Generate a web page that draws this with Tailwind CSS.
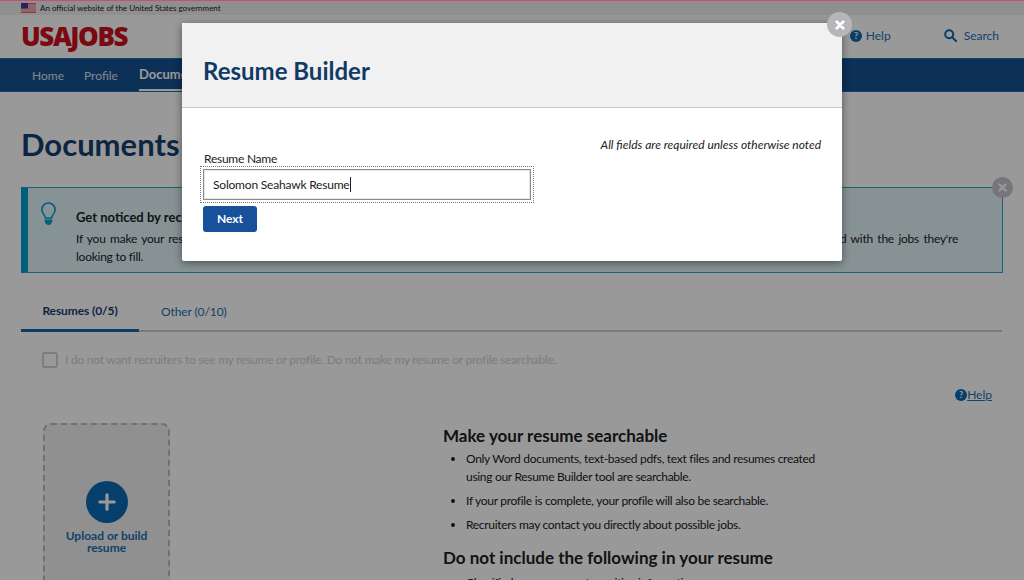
<!DOCTYPE html>
<html lang="en">
<head>
    <meta charset="UTF-8">
    <meta name="viewport" content="width=device-width, initial-scale=1.0">
    <title>Documents - USAJOBS</title>
    <script src="https://cdn.jsdelivr.net/npm/@tailwindcss/browser@4"></script>
</head>
<body class="relative h-[580px] overflow-hidden bg-white font-['Lato','Liberation_Sans',sans-serif] text-[#212121]">
    <!-- Page behind the modal -->
    <div class="h-[580px] overflow-hidden">
        <!-- Government banner -->
        <div class="flex h-[15px] items-center gap-[4px] bg-[#eeeeee] pl-[21px] text-[8px]">
            <svg class="h-[10px] w-[15px]" viewBox="0 0 15 10">
                <rect width="15" height="10" fill="#e4626f"/>
                <path d="M0 2h15M0 4h15M0 6h15M0 8h15" stroke="#fff" stroke-width="0.9"/>
                <rect width="7" height="5.5" fill="#3d3f8f"/>
            </svg>
            <span>An official website of the United States government</span>
        </div>

        <!-- Header -->
        <div class="flex h-[43px] items-center justify-between bg-white pl-[21px] pr-[25px]">
            <span class="font-['Open_Sans',sans-serif] text-[26px] font-extrabold tracking-[-1.4px] text-[#cc1020]">USAJOBS</span>
            <div class="mb-[2px] flex items-center text-[12px] text-[#1a6fb5]">
                <svg class="h-[12px] w-[12px]" viewBox="0 0 12 12">
                    <circle cx="6" cy="6" r="6" fill="#0a6ab5"/>
                    <text x="6" y="9.2" text-anchor="middle" font-size="9" font-weight="700" fill="#fff">?</text>
                </svg>
                <span class="ml-[4px]">Help</span>
                <svg class="ml-[53px] h-[13px] w-[13px]" viewBox="0 0 13 13" fill="none" stroke="#0a6ab5" stroke-width="2">
                    <circle cx="5.2" cy="5.2" r="4"/>
                    <path d="M8.2 8.2l4 4" stroke-linecap="round"/>
                </svg>
                <span class="ml-[7px]">Search</span>
            </div>
        </div>

        <!-- Nav -->
        <div class="flex h-[34px] items-stretch gap-[20px] border-y border-[#2a6cb0] bg-[#17508f] pl-[32px] text-[12px] text-[#d8e2ee]">
            <div class="flex items-center pt-[1px]">Home</div>
            <div class="flex items-center pt-[1px]">Profile</div>
            <div class="ml-[1px] flex items-center border-b-2 border-white pt-[1px] text-[13px] font-bold text-white">Documents</div>
        </div>

        <main class="px-[21px]">
            <h1 class="mt-[32px] text-[31px] leading-[40px] font-bold text-[#173f6e]">Documents</h1>

            <!-- Info alert -->
            <div class="relative mt-[23px] flex h-[86px] w-[982px] border border-[#2aa7cc] border-l-[7px] border-l-[#00a0cc] bg-[#e1f3f8]">
                <svg class="ml-[13px] mt-[14px] h-[24px] w-[15px]" viewBox="0 0 17 25" fill="none" stroke="#00a0cc" stroke-width="1.8">
                    <path d="M5 17c0-3-4-5-4-9.500a7.500 7.500 0 0 1 15 0c0 4.500-4 6.500-4 9.500z"/>
                    <path d="M5 19.500c0 3 2 4.500 3.500 4.500s3.500-1.500 3.500-4.500z" fill="#00a0cc"/>
                </svg>
                <div class="ml-[20px] mt-[20px] text-[12px] leading-[18px] tracking-[-0.25px]">
                    <p class="text-[13px] font-bold tracking-normal">Get noticed by recruiters</p>
                    <p class="mt-[4px] w-[882px] text-justify">If you make your resume searchable, recruiters looking for talent can find you. Your resume lets them see your skills, experience and how you stand with the jobs they're looking&nbsp;to&nbsp;fill.</p>
                </div>
                <div class="absolute -right-[11px] -top-[11px] flex h-[21px] w-[21px] items-center justify-center rounded-full bg-[#c4c4cc]">
                    <svg class="h-[9px] w-[9px]" viewBox="0 0 9 9" stroke="#fff" stroke-width="2.400" stroke-linecap="round"><path d="M1.500 1.500l6 6M7.500 1.500l-6 6"/></svg>
                </div>
            </div>

            <!-- Tabs -->
            <div class="mt-[26px] flex h-[33px] w-[981px] border-b-2 border-[#cccccc] text-[12px] tracking-[-0.1px]">
                <div class="-mb-[2px] flex w-[118px] items-center justify-center border-b-[3px] border-[#0a6ab5] pb-[6px] font-bold text-[#173f6e]">Resumes (0/5)</div>
                <div class="flex items-center pb-[6px] pl-[22px] text-[#1a6fb5]">Other (0/10)</div>
            </div>

            <!-- Searchable checkbox -->
            <div class="ml-[21px] mt-[19px] flex items-center gap-[7px] text-[12px] tracking-[-0.25px] text-[#cfcfcf]">
                <div class="h-[16px] w-[16px] rounded-[3px] border-2 border-[#d0d0d0]"></div>
                <span>I do not want recruiters to see my resume or profile. Do not make my resume or profile searchable.</span>
            </div>

            <div class="mt-[17px] flex w-[971px] items-center justify-end text-[12px] text-[#1a6fb5]">
                <svg class="h-[12px] w-[12px]" viewBox="0 0 12 12">
                    <circle cx="6" cy="6" r="6" fill="#0a6ab5"/>
                    <text x="6" y="9.2" text-anchor="middle" font-size="9" font-weight="700" fill="#fff">?</text>
                </svg>
                <span class="underline">Help</span>
            </div>

            <div class="mt-[19px] flex">
                <!-- Upload card -->
                <div class="ml-[22px] flex h-[200px] w-[127px] flex-col items-center rounded-[8px] border-2 border-dashed border-[#bdbdbd] bg-[#f0f0f0] pt-[56px]">
                    <div class="flex h-[42px] w-[42px] items-center justify-center rounded-full bg-[#0a6ab5]">
                        <svg class="h-[18px] w-[18px]" viewBox="0 0 18 18" stroke="#fff" stroke-width="3.200" stroke-linecap="round"><path d="M9 1.800v14.400M1.800 9h14.400"/></svg>
                    </div>
                    <p class="mt-[7px] text-center text-[12px] leading-[12px] font-bold text-[#1a6fb5]">Upload or build<br>resume</p>
                </div>

                <!-- Searchable tips -->
                <div class="ml-[273px] w-[390px]">
                    <h2 class="mt-[1px] text-[17px] leading-[24px] font-bold">Make your resume searchable</h2>
                    <ul class="ml-[23px] list-disc text-[12px] leading-[18px] tracking-[-0.3px]">
                        <li class="mt-[2px]">Only Word documents, text-based pdfs, text files and resumes created using our Resume Builder tool are searchable.</li>
                        <li class="mt-[6px]">If your profile is complete, your profile will also be searchable.</li>
                        <li class="mt-[6px]">Recruiters may contact you directly about possible jobs.</li>
                    </ul>
                    <h2 class="mt-[12px] text-[17px] leading-[24px] font-bold">Do not include the following in your resume</h2>
                    <ul class="ml-[23px] list-disc text-[12px] leading-[18px] tracking-[-0.3px]">
                        <li class="mt-[4px]">Classified or government sensitive information</li>
                    </ul>
                </div>
            </div>
        </main>
    </div>

    <!-- Overlay -->
    <div class="absolute inset-0 bg-black/40"></div>
    <div class="absolute left-0 top-0 h-px w-full bg-[#c4507f]"></div>

    <!-- Resume Builder modal -->
    <div class="absolute left-[182px] top-[23px] h-[238px] w-[660px] rounded-[2px] bg-white shadow-[0_2px_8px_rgba(0,0,0,0.45)]">
        <div class="flex h-[85px] items-center border-b border-[#c8c8c8] bg-[#f1f1f1] pl-[21px] pt-[12px]">
            <h2 class="text-[24px] font-bold text-[#123a66]">Resume Builder</h2>
        </div>
        <div class="relative pl-[22px]">
            <p class="absolute right-[21px] top-[29px] text-[12px] leading-[16px] italic">All fields are required unless otherwise noted</p>
            <label class="block pt-[43px] text-[12px] leading-[15px] tracking-[-0.25px]">Resume Name</label>
            <div class="-ml-[4px] w-[334px] border border-dotted border-[#777] p-[2px]">
                <div class="flex h-[31px] items-center border border-[#8c8c8c] pl-[9px] text-[12px] tracking-[-0.2px] shadow-[inset_0_0_0_1px_#e5e5e5]">
                    <span>Solomon Seahawk Resume</span><span class="h-[15px] w-px bg-[#212121]"></span>
                </div>
            </div>
            <button class="-ml-[1px] mt-[3px] flex h-[26px] w-[54px] items-center justify-center rounded-[3px] bg-[#17509b] text-[12px] font-bold text-white">Next</button>
        </div>
        <div class="absolute -right-[10px] -top-[11px] flex h-[25px] w-[25px] items-center justify-center rounded-full bg-[#b5b5bb]">
            <svg class="h-[10px] w-[10px]" viewBox="0 0 10 10" stroke="#fff" stroke-width="2.800" stroke-linecap="round"><path d="M1.800 1.800l6.400 6.400M8.200 1.800l-6.400 6.400"/></svg>
        </div>
    </div>
</body>
</html>
